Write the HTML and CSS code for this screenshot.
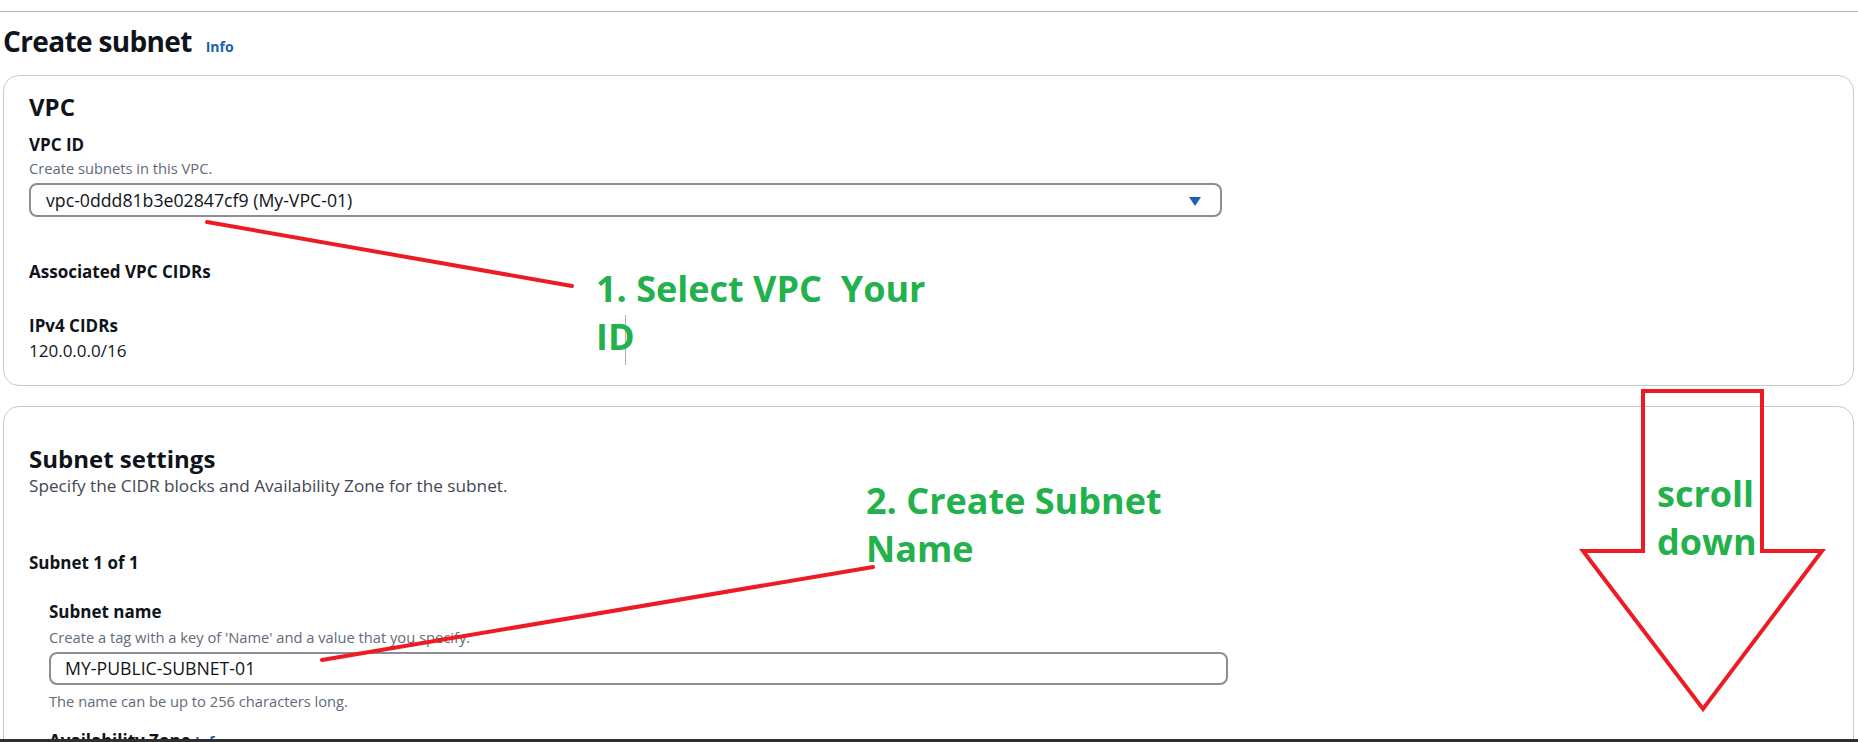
FILE: index.html
```html
<!DOCTYPE html>
<html lang="en">
<head>
<meta charset="utf-8">
<title>Create subnet</title>
<link rel="stylesheet" href="styles.css">
</head>
<body>
<div class="page">
  <div class="rule"></div>
  <header class="page-header">
    <h1>Create subnet</h1>
    <a class="info">Info</a>
  </header>

  <section class="card card-vpc">
    <h2>VPC</h2>
    <div class="label label-first">VPC ID</div>
    <div class="desc">Create subnets in this VPC.</div>
    <div class="select">
      <span>vpc-0ddd81b3e02847cf9 (My-VPC-01)</span>
      <svg class="caret" width="12" height="9" viewBox="0 0 12 9"><path d="M0 0 H12 L6 9 Z" fill="#1d5eb5"/></svg>
    </div>
    <div class="label label-assoc">Associated VPC CIDRs</div>
    <div class="label label-ipv4">IPv4 CIDRs</div>
    <div class="value">120.0.0.0/16</div>
  </section>

  <section class="card card-settings">
    <h2>Subnet settings</h2>
    <p class="lead">Specify the CIDR blocks and Availability Zone for the subnet.</p>
    <div class="label label-count">Subnet 1 of 1</div>
    <div class="subnet-block">
      <div class="label label-name">Subnet name</div>
      <div class="desc">Create a tag with a key of 'Name' and a value that you specify.</div>
      <div class="input">MY-PUBLIC-SUBNET-01</div>
      <div class="desc hint">The name can be up to 256 characters long.</div>
      <div class="label label-az">Availability Zone <a class="info">Info</a></div>
    </div>
  </section>
</div>

<svg class="annotations" width="1858" height="742" viewBox="0 0 1858 742">
  <line x1="207" y1="222" x2="572" y2="286" stroke="#ed1c24" stroke-width="4" stroke-linecap="round"/>
  <line x1="322" y1="660" x2="873" y2="567" stroke="#ed1c24" stroke-width="4" stroke-linecap="round"/>
  <line x1="625.5" y1="315" x2="625.5" y2="365" stroke="#b0b0b0" stroke-width="1"/>
  <polygon points="1643,391 1762,391 1762,551 1822,551 1703,709 1583,551 1643,551" fill="none" stroke="#ed1c24" stroke-width="4" stroke-linejoin="miter"/>
</svg>
<div class="note note-vpc">1. Select VPC&nbsp; Your<br>ID</div>
<div class="note note-subnet">2. Create Subnet<br>Name</div>
<div class="note note-scroll">scroll<br>down</div>
<div class="window-edge"></div>
</body>
</html>
```

FILE: styles.css
```css
html, body {
  margin: 0;
  padding: 0;
  overflow: hidden;
  background: #ffffff;
}

body {
  font-family: "Open Sans", "Noto Sans", sans-serif;
  color: #0f141a;
  height: 742px;
}

.page {
  padding: 0 4px 0 3px;
}

.rule {
  margin: 11px -4px 0 -3px;
  border-top: 1px solid #b6b6bd;
}

.page-header {
  display: flex;
  align-items: baseline;
  gap: 14px;
  padding-top: 11px;
}

.page-header h1 {
  margin: 0;
  font-size: 28px;
  line-height: 36px;
  font-weight: 700;
  letter-spacing: -0.65px;
}

.info {
  font-size: 14px;
  font-weight: 700;
  color: #1d5eb5;
  text-decoration: none;
}

.card {
  border: 1px solid #c6cacf;
  border-radius: 16px;
  padding-left: 25px;
  padding-right: 25px;
}

.card h2 {
  margin: 0;
  font-size: 24px;
  line-height: 30px;
  font-weight: 700;
}

.card-vpc {
  margin-top: 16px;
  padding-top: 16px;
  padding-bottom: 23px;
}

.card-settings {
  margin-top: 20px;
  padding-top: 37px;
  height: 400px;
}

.label {
  font-size: 17px;
  line-height: 22px;
  font-weight: 700;
}

.label-first { margin-top: 12px; }
.label-assoc { margin-top: 44px; }
.label-ipv4 { margin-top: 32px; }
.label-count { margin-top: 55px; }
.label-name { margin-top: 27px; }
.label-az { margin-top: 20px; }

.desc {
  font-size: 14.7px;
  line-height: 18px;
  color: #5f6b7a;
  margin-top: 5px;
}

.card-vpc .desc {
  margin-top: 3px;
}

.hint {
  margin-top: 7px;
}

.value {
  margin-top: 3px;
  font-size: 17px;
  line-height: 22px;
}

.select {
  margin-top: 6px;
  width: 1193px;
  height: 34px;
  box-sizing: border-box;
  border: 2px solid #8c8c94;
  border-radius: 8px;
  display: flex;
  align-items: center;
  padding: 0 19px 0 15px;
  font-size: 17.7px;
  line-height: 30px;
}

.select .caret {
  margin-left: auto;
  margin-top: 2px;
}

.lead {
  margin: 1px 0 0;
  font-size: 17.2px;
  line-height: 22px;
  color: #414750;
}

.subnet-block {
  padding-left: 20px;
}

.input {
  margin-top: 6px;
  width: 1179px;
  height: 33px;
  box-sizing: border-box;
  border: 2px solid #8c8c94;
  border-radius: 8px;
  padding: 0 14px;
  font-size: 17.7px;
  line-height: 29px;
}

.annotations {
  position: absolute;
  top: 0;
  left: 0;
  pointer-events: none;
}

.note {
  position: absolute;
  font-family: "Open Sans", "Noto Sans", sans-serif;
  font-weight: 700;
  font-size: 36px;
  line-height: 48px;
  color: #22b14c;
  white-space: nowrap;
}

.note-vpc { left: 596px; top: 265px; }
.note-subnet { left: 866px; top: 477px; }
.note-scroll { left: 1657px; top: 470px; }

.window-edge {
  position: fixed;
  left: 0;
  right: 0;
  bottom: 0;
  height: 3px;
  background: #2f2f2f;
}
```
